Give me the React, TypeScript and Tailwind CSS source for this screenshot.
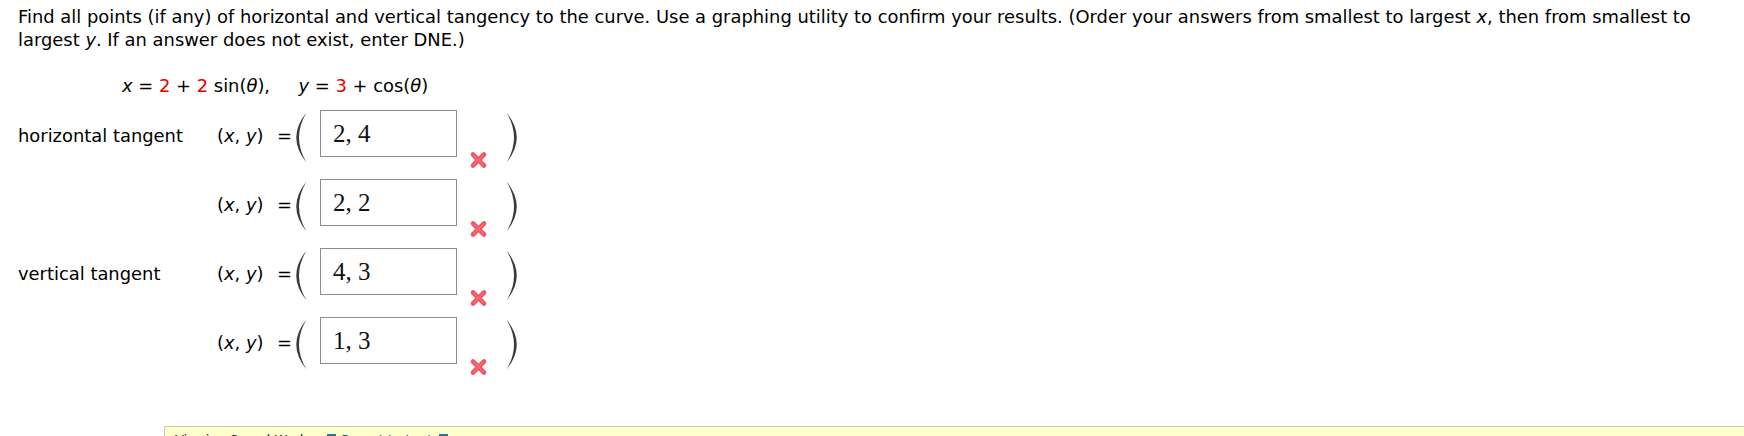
import React from "react";

const sans = "font-['Verdana','DejaVu_Sans',sans-serif]";

function Paren({ right = false }: { right?: boolean }) {
  return (
    <svg width="12" height="51" viewBox="0 0 12 51" className={right ? "-scale-x-100" : ""} aria-hidden>
      <path d="M11.5 0.5 Q-9 25.5 11.5 50.5 Q-3.5 25.5 11.5 0.5 Z" fill="#3a3a3a" />
    </svg>
  );
}

function WrongMark() {
  return (
    <svg width="19" height="18" viewBox="0 0 19 18" aria-hidden>
      <path d="M4 3.5 L15 14.5 M15 3.5 L4 14.5" stroke="#ef5562" strokeWidth="4.6" strokeLinecap="round" />
      <path d="M4.5 4 L14.5 14 M14.5 4 L4.5 14" stroke="#f7858d" strokeWidth="1.4" strokeLinecap="round" opacity="0.55" />
    </svg>
  );
}

function AnswerRow({ label, value }: { label?: string; value: string }) {
  return (
    <div className="flex h-[47px] items-start">
      <div className="mt-[14px] w-[199px] leading-[23px]">{label}</div>
      <div className="mt-[14px] w-[60px] leading-[23px]">
        (<i>x</i>, <i>y</i>)
      </div>
      <span className="mt-[14px] leading-[23px]">=</span>
      <div className="ml-[3px] mt-[2px] flex">
        <Paren />
      </div>
      <div className="ml-[13px] flex h-[47px] w-[137px] items-center border border-[#8c8c8c] bg-white pl-[12px] font-['Liberation_Serif',serif] text-[25px] leading-none text-[#111]">
        {value}
      </div>
      <div className="ml-[12px] mt-[41px] flex">
        <WrongMark />
      </div>
      <div className="ml-[18px] mt-[2px] flex">
        <Paren right />
      </div>
    </div>
  );
}

export default function App() {
  return (
    <div className={`${sans} min-h-[436px] bg-white text-[17.9px] text-black`}>
      <div className="pl-[18px] pt-[5px]">
        <p className="whitespace-nowrap leading-[23px]">
          Find all points (if any) of horizontal and vertical tangency to the curve. Use a graphing utility to confirm
          your results. (Order your answers from smallest to largest <i>x</i>, then from smallest to
          <br />
          largest <i>y</i>. If an answer does not exist, enter DNE.)
        </p>
        <p className="mt-[23px] whitespace-pre pl-[104px] leading-[23px]">
          <i>x</i> = <span className="text-[#e00000]">2</span> + <span className="text-[#e00000]">2</span> sin(
          <i>θ</i>),{"     "}
          <i>y</i> = <span className="text-[#e00000]">3</span> + cos(<i>θ</i>)
        </p>
        <div className="mt-[13px] flex flex-col gap-[22px]">
          <AnswerRow label="horizontal tangent" value="2, 4" />
          <AnswerRow value="2, 2" />
          <AnswerRow label="vertical tangent" value="4, 3" />
          <AnswerRow value="1, 3" />
        </div>
      </div>
      <div className="ml-[164px] mt-[62px] flex items-center border-t border-l border-[#c8c8bc] bg-[#ffffcc] px-[10px] pt-[3px] pb-[10px] text-[13px] text-[#222]">
        <span>Viewing Saved Work</span>
        <span className="ml-[20px] inline-block h-[12px] w-[9px] bg-[#2a6fb0]" />
        <span className="ml-[5px] text-[#1a4f8a]">Revert to Last</span>
        <span className="ml-[7px] inline-block h-[12px] w-[9px] bg-[#2a6fb0]" />
      </div>
    </div>
  );
}
